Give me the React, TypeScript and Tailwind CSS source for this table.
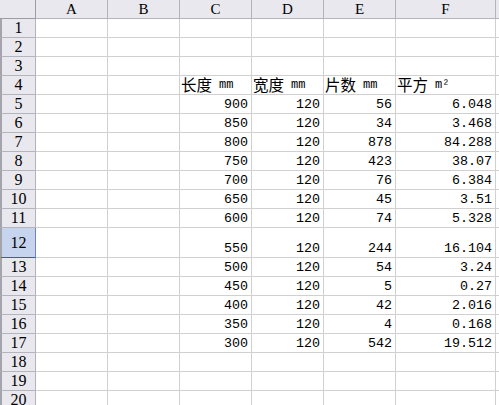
const cols = ["A", "B", "C", "D", "E", "F"];

type Row = { n: number; tall?: boolean; cells?: (string | null)[]; head?: boolean };

const data: [string, string, string, string][] = [
  ["900", "120", "56", "6.048"],
  ["850", "120", "34", "3.468"],
  ["800", "120", "878", "84.288"],
  ["750", "120", "423", "38.07"],
  ["700", "120", "76", "6.384"],
  ["650", "120", "45", "3.51"],
  ["600", "120", "74", "5.328"],
  ["550", "120", "244", "16.104"],
  ["500", "120", "54", "3.24"],
  ["450", "120", "5", "0.27"],
  ["400", "120", "42", "2.016"],
  ["350", "120", "4", "0.168"],
  ["300", "120", "542", "19.512"],
];

const rows: Row[] = [];
for (let n = 1; n <= 20; n++) {
  if (n === 4) rows.push({ n, head: true });
  else if (n >= 5 && n <= 17) rows.push({ n, tall: n === 12, cells: [null, null, ...data[n - 5]] });
  else rows.push({ n });
}

const heads: [string, string][] = [
  ["长度", "mm"],
  ["宽度", "mm"],
  ["片数", "mm"],
  ["平方", "m²"],
];

const cjk = "font-['Noto_Sans_CJK_SC',sans-serif]";
const mono = "font-['Liberation_Mono',monospace]";

function Cell({ children, right }: { children?: React.ReactNode; right?: boolean }) {
  return (
    <div
      className={`flex items-end whitespace-nowrap border-r border-b border-[#d0d0d0] bg-white pb-[1px] ${
        right ? "justify-end pr-[3px]" : "pl-[1px]"
      }`}
    >
      {children}
    </div>
  );
}

export default function App() {
  return (
    <div className="h-[405px] w-[499px] overflow-hidden bg-white">
      <div className="grid grid-cols-[36px_72px_72px_72px_72px_72px_100px_40px] grid-rows-[repeat(12,19px)_30px_repeat(8,19px)] text-black">
        <div className="border-r border-b border-[#9c9ca4] bg-[#e9e8ee]" />
        {cols.map((c) => (
          <div
            key={c}
            className="flex items-center justify-center border-r border-b border-[#b4b4bc] bg-[#e9e8ee] font-['Liberation_Serif',serif] text-[15px] leading-none"
          >
            {c}
          </div>
        ))}
        <div className="border-b border-[#b4b4bc] bg-[#e9e8ee]" />

        {rows.map((r) => (
          <div key={r.n} className="contents">
            <div
              className={`flex items-center justify-center border-l-2 border-l-[#a4a4ac] font-['Liberation_Serif',serif] text-[16px] leading-none ${
                r.tall
                  ? "border-r border-b border-r-[#6f86b4] border-b-[#3e5f9c] bg-[#c7d4ee]"
                  : "border-r border-b border-[#b4b4bc] bg-[#e9e8ee]"
              }`}
            >
              {r.n}
            </div>
            {r.head ? (
              <>
                <Cell />
                <Cell />
                {heads.map(([a, b]) => (
                  <Cell key={a}>
                    <span className={`${cjk} text-[15.5px] leading-[18px]`}>{a}</span>
                    <span className={`${mono} ml-[7px] text-[12px] leading-[15px]`}>{b}</span>
                  </Cell>
                ))}
                <Cell />
              </>
            ) : (
              <>
                {[0, 1, 2, 3, 4, 5].map((i) => (
                  <Cell key={i} right>
                    {r.cells && r.cells[i] ? (
                      <span className={`${mono} text-[13.33px] leading-[15px]`}>{r.cells[i]}</span>
                    ) : null}
                  </Cell>
                ))}
                <Cell />
              </>
            )}
          </div>
        ))}
      </div>
    </div>
  );
}
